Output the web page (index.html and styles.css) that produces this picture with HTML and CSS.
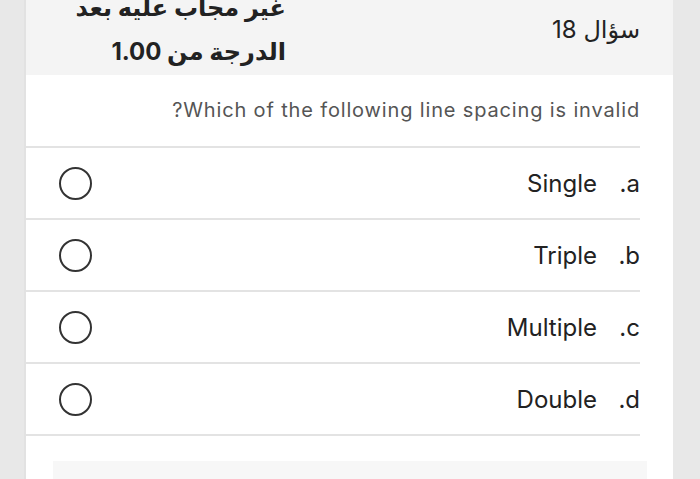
FILE: index.html
```html
<!DOCTYPE html>
<html lang="ar" dir="rtl">
<head>
<meta charset="utf-8">
<link rel="stylesheet" href="styles.css">
</head>
<body>
<div class="card">
  <div class="header">
    <div class="qno">سؤال <span class="num">18</span></div>
    <div class="status">
      <div class="status-line">غير مجاب عليه بعد</div>
      <div class="status-line">الدرجة من <span class="num">1.00</span></div>
    </div>
  </div>
  <div class="body">
    <div class="question">Which of the following line spacing is invalid?</div>
    <div class="option"><span class="letter">a.</span><span class="label">Single</span><span class="radio"></span></div>
    <div class="option"><span class="letter">b.</span><span class="label">Triple</span><span class="radio"></span></div>
    <div class="option"><span class="letter">c.</span><span class="label">Multiple</span><span class="radio"></span></div>
    <div class="option"><span class="letter">d.</span><span class="label">Double</span><span class="radio"></span></div>
    <div class="footer-box"></div>
  </div>
</div>
</body>
</html>
```

FILE: styles.css
```css
html, body {
  margin: 0;
  padding: 0;
  background: #e8e8e8;
  height: 100%;
  overflow: hidden;
}
body {
  font-family: "Inter", "DejaVu Sans", sans-serif;
  color: #222;
}
.card {
  margin-right: 27px;
  width: 647px;
  background: #fff;
  height: 479px;
  box-shadow: -2px 0 0 #e2e2e2;
}
.header {
  height: 75px;
  background: #f4f4f4;
  display: flex;
  align-items: flex-start;
  padding-right: 33px;
  box-sizing: border-box;
}
.qno {
  font-size: 24px;
  margin-top: 14px;
  line-height: 32px;
  color: #222;
}
.status {
  margin-right: 266px;
  margin-top: -14px;
  font-weight: bold;
  font-size: 24px;
  color: #222;
}
.status-line {
  line-height: 44px;
}
.body {
  padding-right: 33px;
}
.question {
  height: 71px;
  line-height: 71px;
  font-size: 20px;
  letter-spacing: 0.85px;
  color: #555;
  border-bottom: 2px solid #e3e3e3;
}
.option {
  height: 70px;
  display: flex;
  align-items: center;
  border-bottom: 2px solid #e3e3e3;
  font-size: 24px;
  color: #222;
}
.letter {
  width: 20px;
}
.label {
  margin-right: 23px;
  flex: 1;
}
.radio {
  width: 29px;
  height: 29px;
  border: 2px solid #333;
  border-radius: 50%;
  margin-left: 33px;
}
.footer-box {
  margin-top: 25px;
  margin-right: -7px;
  margin-left: 27px;
  height: 40px;
  background: #f7f7f7;
}
```
